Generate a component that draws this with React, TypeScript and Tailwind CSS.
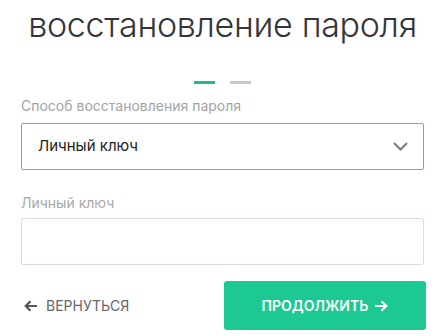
import React, { useState } from "react";

const ChevronDown: React.FC = () => (
  <svg width="15" height="9" viewBox="0 0 15 9" fill="none">
    <path d="M1 1l6.5 6.5L14 1" stroke="#7a7a7a" strokeWidth="2" />
  </svg>
);

const Arrow: React.FC<{ dir: "left" | "right"; color: string }> = ({ dir, color }) => (
  <svg
    width="13"
    height="12"
    viewBox="0 0 13 12"
    fill="none"
    style={{ transform: dir === "left" ? "scaleX(-1)" : undefined }}
  >
    <path d="M0 6h11M6.5 1.2L11.3 6l-4.8 4.8" stroke={color} strokeWidth="2.2" />
  </svg>
);

const App: React.FC = () => {
  const [key, setKey] = useState("");

  return (
    <div
      className="w-[445px] h-[336px] bg-white px-[21px] overflow-hidden"
      style={{ fontFamily: "Inter, 'Noto Sans', sans-serif" }}
    >
      {/* Title */}
      <h1 className="text-center whitespace-nowrap text-[34px] font-light leading-[44px] pt-[3px] text-[#34343a] tracking-[-0.3px] mx-[-21px]">
        восстановление пароля
      </h1>

      {/* Step indicator */}
      <div className="flex justify-center gap-[15px] mt-[34px]">
        <span className="w-[21px] h-[3px] bg-[#20b990]" />
        <span className="w-[21px] h-[3px] bg-[#c8c8c8]" />
      </div>

      {/* Recovery method */}
      <label className="block mt-[13px] text-[14px] leading-[18px] text-[#a3a3a3]">
        Способ восстановления пароля
      </label>
      <div className="mt-[8px] h-[47px] border border-[#46c2a4] rounded-[2px] flex items-center justify-between pl-[16px] pr-[15px]">
        <span className="text-[15px] text-[#222]">Личный ключ</span>
        <ChevronDown />
      </div>

      {/* Personal key */}
      <label className="block mt-[24px] text-[14px] leading-[18px] text-[#a8a8a8]">
        Личный ключ
      </label>
      <input
        value={key}
        onChange={(e) => setKey(e.target.value)}
        className="mt-[6px] block w-full h-[47px] border border-[#d7dede] rounded-[2px] px-[16px] text-[15px] outline-none"
      />

      {/* Actions */}
      <div className="mt-[16px] flex items-center justify-between">
        <button className="flex items-center gap-[9px] pl-[3px] text-[14px] text-[#666] uppercase">
          <Arrow dir="left" color="#555" />
          Вернуться
        </button>
        <button className="w-[202px] h-[49px] rounded-[3px] bg-[#1cc993] text-white text-[14px] font-semibold uppercase flex items-center justify-center gap-[7px] mr-[-2px]">
          Продолжить
          <Arrow dir="right" color="#fff" />
        </button>
      </div>
    </div>
  );
};

export default App;
